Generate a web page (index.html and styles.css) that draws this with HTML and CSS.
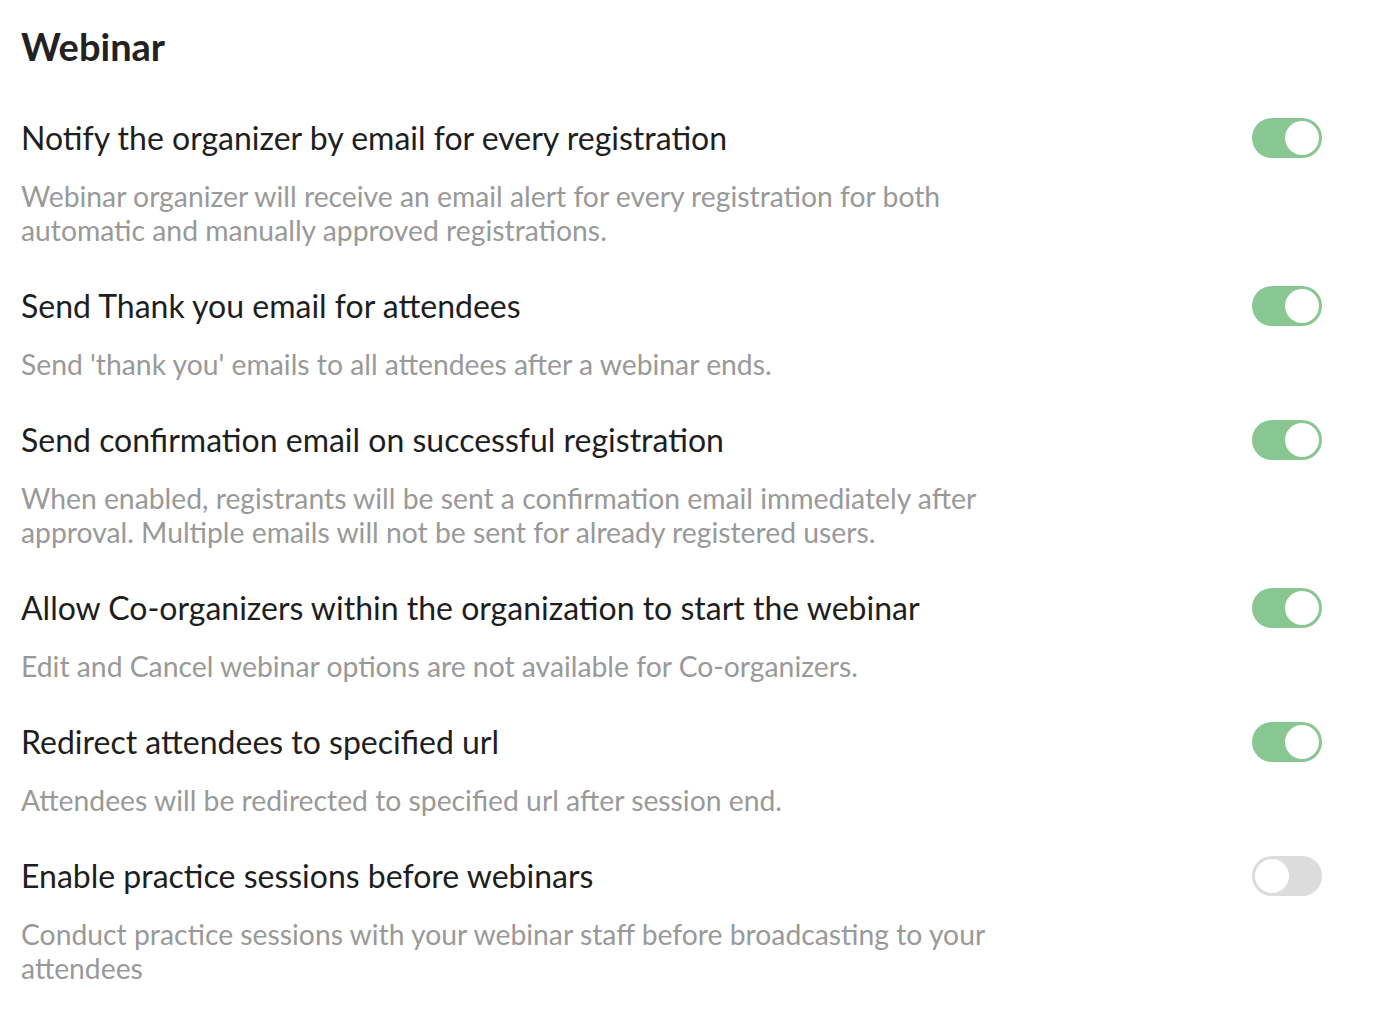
FILE: index.html
```html
<!DOCTYPE html>
<html>
<head>
<meta charset="utf-8">
<link rel="stylesheet" href="styles.css">
</head>
<body>
<div class="page">
  <h1 class="title">Webinar</h1>
  <div class="list">
    <div class="row">
      <div class="text">
        <div class="heading">Notify the organizer by email for every registration</div>
        <div class="desc">Webinar organizer will receive an email alert for every registration for both automatic and manually approved registrations.</div>
      </div>
      <div class="toggle on"><span class="knob"></span></div>
    </div>
    <div class="row">
      <div class="text">
        <div class="heading">Send Thank you email for attendees</div>
        <div class="desc">Send 'thank you' emails to all attendees after a webinar ends.</div>
      </div>
      <div class="toggle on"><span class="knob"></span></div>
    </div>
    <div class="row">
      <div class="text">
        <div class="heading">Send confirmation email on successful registration</div>
        <div class="desc">When enabled, registrants will be sent a confirmation email immediately after approval. Multiple emails will not be sent for already registered users.</div>
      </div>
      <div class="toggle on"><span class="knob"></span></div>
    </div>
    <div class="row">
      <div class="text">
        <div class="heading">Allow Co-organizers within the organization to start the webinar</div>
        <div class="desc">Edit and Cancel webinar options are not available for Co-organizers.</div>
      </div>
      <div class="toggle on"><span class="knob"></span></div>
    </div>
    <div class="row">
      <div class="text">
        <div class="heading">Redirect attendees to specified url</div>
        <div class="desc">Attendees will be redirected to specified url after session end.</div>
      </div>
      <div class="toggle on"><span class="knob"></span></div>
    </div>
    <div class="row">
      <div class="text">
        <div class="heading">Enable practice sessions before webinars</div>
        <div class="desc">Conduct practice sessions with your webinar staff before broadcasting to your attendees</div>
      </div>
      <div class="toggle off"><span class="knob"></span></div>
    </div>
  </div>
</div>
</body>
</html>
```
FILE: styles.css
```css
html, body {
  margin: 0;
  padding: 0;
  background: #ffffff;
  font-family: Lato, "Open Sans", sans-serif;
}
.page {
  padding: 26px 72px 0 21px;
}
.title {
  margin: 0;
  font-size: 38px;
  line-height: 40px;
  font-weight: 700;
  color: #222222;
}
.list {
  margin-top: 52px;
  display: flex;
  flex-direction: column;
  gap: 39px;
}
.row {
  display: flex;
  justify-content: space-between;
  align-items: flex-start;
}
.text {
  width: 1000px;
}
.heading {
  font-size: 32px;
  line-height: 40px;
  color: #1e1e1e;
}
.desc {
  margin-top: 21px;
  font-size: 28.3px;
  line-height: 34px;
  color: #999999;
}
.toggle {
  width: 70px;
  height: 40px;
  border-radius: 20px;
  box-sizing: border-box;
  padding: 3px;
  display: flex;
}
.toggle.on {
  background: #88c791;
  justify-content: flex-end;
}
.toggle.off {
  background: #dcdcdc;
  justify-content: flex-start;
}
.knob {
  width: 34px;
  height: 34px;
  border-radius: 50%;
  background: #ffffff;
}
```
